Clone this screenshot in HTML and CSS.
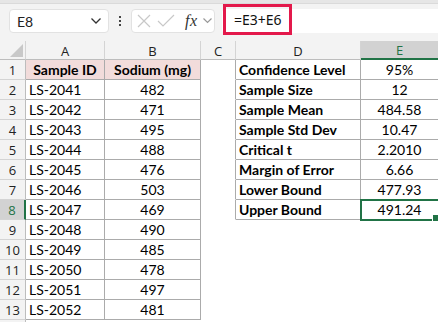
FILE: index.html
```html
<!DOCTYPE html>
<html lang="en">
<head>
<meta charset="UTF-8">
<title>Confidence interval sheet</title>
<link rel="stylesheet" href="styles.css">
</head>
<body>
  <div class="topstrip"></div>
  <div class="toolbar">
    <div class="namebox">
      <span class="ref">E8</span>
      <svg class="chev" width="12" height="8" viewBox="0 0 12 8"><path d="M1.5 1.5 L6 6 L10.5 1.5" fill="none" stroke="#333" stroke-width="1.3"/></svg>
    </div>
    <div class="dots"><i></i><i></i><i></i></div>
    <div class="fxbox">
      <svg width="18" height="18" viewBox="0 0 18 18"><path d="M3 3 L15 15 M15 3 L3 15" stroke="#c8c8c8" stroke-width="1.2"/></svg>
      <svg width="20" height="18" viewBox="0 0 20 18"><path d="M2 9 L7 14 L18 3" fill="none" stroke="#c8c8c8" stroke-width="1.2"/></svg>
      <span class="fx">fx</span>
      <svg class="chev2" width="11" height="8" viewBox="0 0 11 8"><path d="M1.5 1.5 L5.5 5.5 L9.5 1.5" fill="none" stroke="#999" stroke-width="1.2"/></svg>
    </div>
    <div class="formula">
      <span class="hl">=E3+E6</span>
    </div>
  </div>

  <div class="sheet">
    <div class="corner"><svg width="14" height="14" viewBox="0 0 14 14"><path d="M14 1 L14 14 L1 14 Z" fill="#c8c8c8"/></svg></div>
    <div class="ch">A</div>
    <div class="ch">B</div>
    <div class="ch">C</div>
    <div class="ch">D</div>
    <div class="ch sel">E</div>

    <div class="rh">1</div>
    <div class="c b hd">Sample ID</div>
    <div class="c b hd">Sodium (mg)</div>
    <div class="c cb"></div>
    <div class="c b lbl">Confidence Level</div>
    <div class="c b num">95%</div>

    <div class="rh">2</div>
    <div class="c b">LS-2041</div>
    <div class="c b num">482</div>
    <div class="c cb"></div>
    <div class="c b lbl">Sample Size</div>
    <div class="c b num">12</div>

    <div class="rh">3</div>
    <div class="c b">LS-2042</div>
    <div class="c b num">471</div>
    <div class="c cb"></div>
    <div class="c b lbl">Sample Mean</div>
    <div class="c b num">484.58</div>

    <div class="rh">4</div>
    <div class="c b">LS-2043</div>
    <div class="c b num">495</div>
    <div class="c cb"></div>
    <div class="c b lbl">Sample Std Dev</div>
    <div class="c b num">10.47</div>

    <div class="rh">5</div>
    <div class="c b">LS-2044</div>
    <div class="c b num">488</div>
    <div class="c cb"></div>
    <div class="c b lbl">Critical t</div>
    <div class="c b num">2.2010</div>

    <div class="rh">6</div>
    <div class="c b">LS-2045</div>
    <div class="c b num">476</div>
    <div class="c cb"></div>
    <div class="c b lbl">Margin of Error</div>
    <div class="c b num">6.66</div>

    <div class="rh">7</div>
    <div class="c b">LS-2046</div>
    <div class="c b num">503</div>
    <div class="c cb"></div>
    <div class="c b lbl">Lower Bound</div>
    <div class="c b num">477.93</div>

    <div class="rh sel">8</div>
    <div class="c b">LS-2047</div>
    <div class="c b num">469</div>
    <div class="c cb"></div>
    <div class="c b lbl">Upper Bound</div>
    <div class="c b num active">491.24<span class="handle"></span></div>

    <div class="rh">9</div>
    <div class="c b">LS-2048</div>
    <div class="c b num">490</div>
    <div class="c"></div>
    <div class="c"></div>
    <div class="c"></div>

    <div class="rh">10</div>
    <div class="c b">LS-2049</div>
    <div class="c b num">485</div>
    <div class="c"></div>
    <div class="c"></div>
    <div class="c"></div>

    <div class="rh">11</div>
    <div class="c b">LS-2050</div>
    <div class="c b num">478</div>
    <div class="c"></div>
    <div class="c"></div>
    <div class="c"></div>

    <div class="rh">12</div>
    <div class="c b">LS-2051</div>
    <div class="c b num">497</div>
    <div class="c"></div>
    <div class="c"></div>
    <div class="c"></div>

    <div class="rh">13</div>
    <div class="c b">LS-2052</div>
    <div class="c b num">481</div>
    <div class="c"></div>
    <div class="c"></div>
    <div class="c"></div>

    <div class="rh tail"></div>
  </div>
</body>
</html>
```

FILE: styles.css
```css
body {
  margin: 0;
  width: 438px;
  height: 322px;
  overflow: hidden;
  background: #fff;
  font-family: Lato, "Open Sans", sans-serif;
  color: #000;
}

.topstrip {
  height: 3px;
  background: #e6e6e6;
  border-bottom: 1px solid #dadada;
}

.toolbar {
  height: 37px;
  background: #f3f3f3;
  display: flex;
  align-items: flex-start;
  padding-top: 5px;
  box-sizing: border-box;
}

.namebox {
  margin-left: 9px;
  width: 100px;
  height: 24px;
  background: #fff;
  border: 1px solid #e2e2e2;
  border-radius: 4px;
  box-sizing: border-box;
  display: flex;
  align-items: center;
  justify-content: space-between;
  padding: 0 6px 0 7px;
  font-size: 14px;
  color: #222;
}

.dots {
  width: 22px;
  height: 24px;
  display: flex;
  flex-direction: column;
  align-items: center;
  justify-content: center;
  gap: 2px;
}
.dots i {
  width: 2px;
  height: 2px;
  background: #444;
}

.fxbox {
  width: 84px;
  height: 24px;
  background: #fff;
  border: 1px solid #e2e2e2;
  border-radius: 4px;
  box-sizing: border-box;
  display: flex;
  align-items: center;
  padding-left: 3px;
  gap: 3px;
}
.fx {
  font-family: "Liberation Serif", serif;
  font-style: italic;
  font-size: 16px;
  color: #333;
  margin-left: 6px;
  letter-spacing: 0.5px;
}
.chev2 {
  margin-left: 1px;
}

.formula {
  margin-left: 7px;
  flex: 1;
  height: 24px;
  background: #fff;
  border-radius: 4px 0 0 4px;
  position: relative;
}
.hl {
  position: absolute;
  left: 1px;
  top: -5px;
  width: 69px;
  height: 31px;
  box-sizing: border-box;
  border: 3px solid #e3194b;
  font-family: "Noto Sans", sans-serif;
  font-size: 14px;
  line-height: 25px;
  padding-left: 8px;
  color: #111;
}

.sheet {
  display: grid;
  grid-template-columns: 26px 79px 96px 35px 125px 78px;
  grid-template-rows: 19px repeat(13, 20px) 2px;
  font-size: 14px;
}

.corner {
  background: #f3f3f3;
  border-right: 1px solid #d4d4d4;
  border-bottom: 1px solid #bdbdbd;
  display: flex;
  align-items: flex-end;
  justify-content: flex-end;
  padding: 0 2px 2px 0;
}

.ch {
  background: #f3f3f3;
  border-right: 1px solid #d4d4d4;
  border-bottom: 1px solid #bdbdbd;
  display: flex;
  align-items: center;
  justify-content: center;
  font-family: "Open Sans", sans-serif;
  font-size: 13px;
  color: #222;
  padding-top: 1px;
}
.ch.sel {
  background: #d2d2d2;
  color: #217346;
  border-bottom: 2px solid #217346;
}

.rh {
  background: #f3f3f3;
  border-right: 1px solid #bdbdbd;
  border-bottom: 1px solid #d4d4d4;
  display: flex;
  align-items: center;
  justify-content: center;
  font-family: "Open Sans", sans-serif;
  font-size: 13px;
  color: #222;
}
.rh.sel {
  background: #d2d2d2;
  color: #217346;
  border-right: 2px solid #217346;
}
.rh.tail {
  border-bottom: none;
}

.c {
  border-right: 1px solid transparent;
  border-bottom: 1px solid transparent;
  display: flex;
  align-items: center;
  padding-left: 3px;
  white-space: nowrap;
  position: relative;
}
.c.b {
  border-color: #ababab;
}
.c.cb {
  border-right-color: #ababab;
}
.hd {
  background: #f2dcdb;
  font-weight: bold;
  justify-content: center;
  padding-left: 0;
}
.lbl {
  font-weight: bold;
}
.num {
  justify-content: center;
  padding-left: 0;
}

.active {
  outline: 2px solid #217346;
  outline-offset: -1px;
}
.handle {
  position: absolute;
  right: -2px;
  bottom: -3px;
  width: 6px;
  height: 6px;
  background: #217346;
  border: 1px solid #fff;
}
```
